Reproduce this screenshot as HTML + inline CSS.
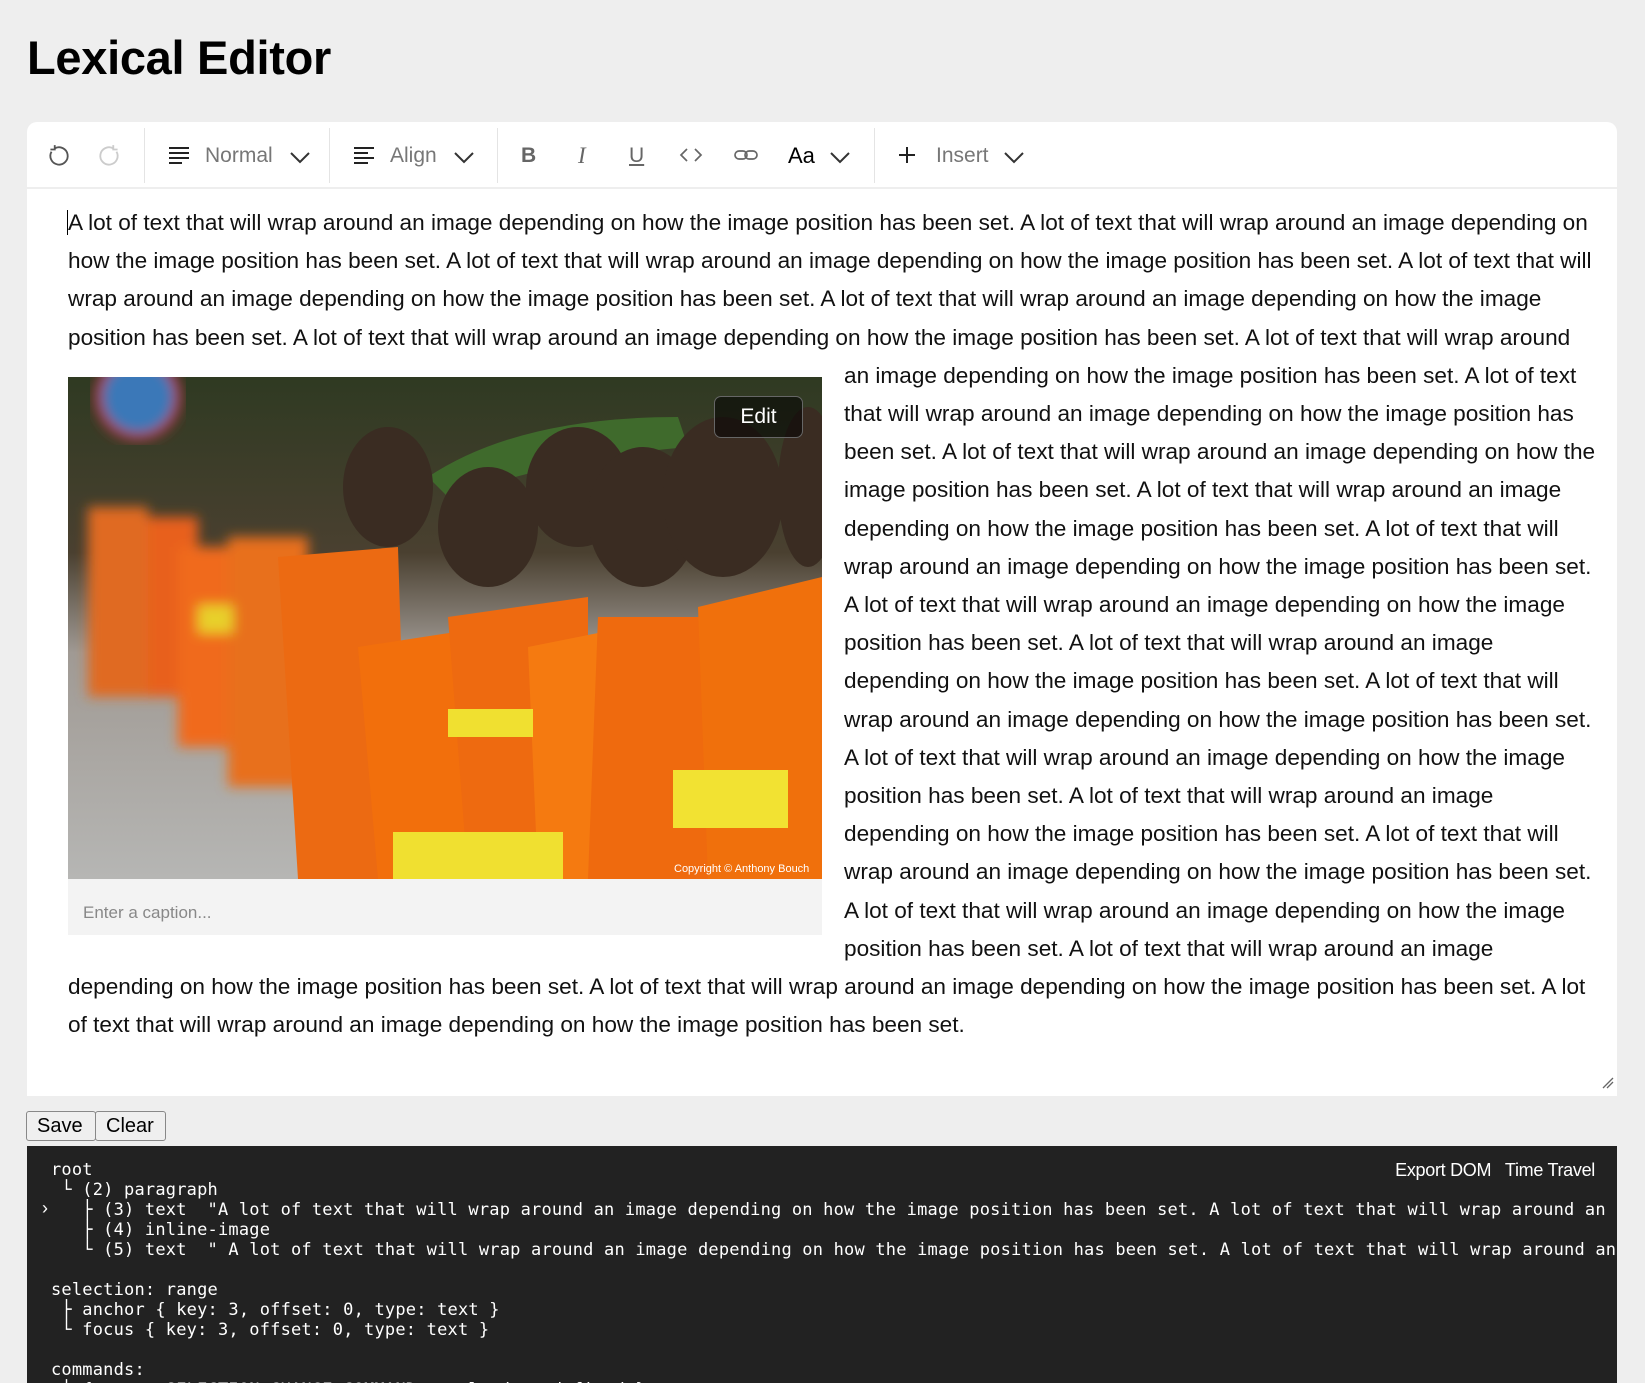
<!DOCTYPE html>
<html><head><meta charset="utf-8"><style>
*{box-sizing:border-box;margin:0;padding:0}
body{width:1645px;height:1383px;background:#eee;font-family:"Liberation Sans",sans-serif;overflow:hidden;position:relative}
h1{position:absolute;left:27px;top:30px;font-size:47px;font-weight:bold;color:#000;letter-spacing:-0.3px}
.ed{position:absolute;left:27px;top:122px;width:1590px;height:974px;background:#fff;border-radius:10px 10px 0 0}
.tb{position:absolute;left:0;top:0;width:100%;height:67px;border-bottom:2px solid #eee}
.tb .i{position:absolute;top:0;height:67px;line-height:67px;font-size:21px;color:#777}
.dv{position:absolute;top:6px;width:1px;height:55px;background:#e4e4e4}
.txt{position:absolute;left:41px;top:82px;width:1532px;font-size:22.6px;line-height:38.2px;color:#111}
.img{float:left;width:754px;height:558px;margin:20px 22px 0 0;background:#f3f3f3;position:relative}
.cap{position:absolute;left:15px;top:517px;font-size:17px;color:#888}
.edit{position:absolute;left:646px;top:19px;width:89px;height:42px;border:1px solid #666;border-radius:7px;background:rgba(0,0,0,.55);color:#fff;font-size:21px;text-align:center;line-height:40px}
.btn{position:absolute;top:1111px;height:30px;border:1px solid #888;border-radius:3px;background:#efefef;font-size:20px;line-height:28px;padding:0 10px;color:#000}
.dark{position:absolute;left:27px;top:1146px;width:1590px;height:237px;background:#222;color:#fff;overflow:hidden}
pre{position:absolute;left:24px;top:14px;font-family:"DejaVu Sans Mono","Liberation Mono",monospace;font-size:17px;line-height:20px;color:#fff;letter-spacing:0.2px;white-space:pre}
.ex{position:absolute;right:22px;top:14px;font-size:18px;color:#fff;letter-spacing:-.3px}
</style></head><body>
<h1>Lexical Editor</h1>
<div class="ed">
<div class="tb">
<svg style="position:absolute;left:18px;top:21px" width="26" height="26" viewBox="0 0 24 24" fill="none" stroke="#555" stroke-width="1.7"><path d="M6 8a8 8 0 1 0 3-3"/><path d="M9 2v4H5"/></svg>
<svg style="position:absolute;left:70px;top:21px" width="26" height="26" viewBox="0 0 24 24" fill="none" stroke="#ccc" stroke-width="1.7"><path d="M18 8a8 8 0 1 1-3-3"/><path d="M15 2v4h4"/></svg>
<div class="dv" style="left:117px"></div>
<svg style="position:absolute;left:140px;top:22px" width="24" height="22" viewBox="0 0 24 22" stroke="#222" stroke-width="2"><path d="M2 4h20M2 9h20M2 14h20M2 19h13"/></svg>
<div class="i" style="left:178px">Normal</div>
<svg style="position:absolute;left:262px;top:28px" width="22" height="14" viewBox="0 0 22 14" fill="none" stroke="#333" stroke-width="2"><path d="M2 3l9 9 9-9"/></svg>
<div class="dv" style="left:302px"></div>
<svg style="position:absolute;left:325px;top:22px" width="24" height="22" viewBox="0 0 24 22" stroke="#222" stroke-width="2"><path d="M2 4h20M2 9h14M2 14h20M2 19h14"/></svg>
<div class="i" style="left:363px">Align</div>
<svg style="position:absolute;left:426px;top:28px" width="22" height="14" viewBox="0 0 22 14" fill="none" stroke="#333" stroke-width="2"><path d="M2 3l9 9 9-9"/></svg>
<div class="dv" style="left:470px"></div>
<div class="i" style="left:494px;font-weight:bold;color:#666">B</div>
<div class="i" style="left:551px;font-style:italic;font-family:'Liberation Serif',serif;color:#666;font-size:23px">I</div>
<div class="i" style="left:602px;text-decoration:underline;color:#666">U</div>
<svg style="position:absolute;left:652px;top:24px" width="24" height="18" viewBox="0 0 24 18" fill="none" stroke="#666" stroke-width="1.7"><path d="M8 3L2 9l6 6M16 3l6 6-6 6"/></svg>
<svg style="position:absolute;left:706px;top:24px" width="26" height="18" viewBox="0 0 26 18" fill="none" stroke="#666" stroke-width="1.7"><rect x="2" y="5" width="12" height="8" rx="4"/><rect x="12" y="5" width="12" height="8" rx="4"/></svg>
<div class="i" style="left:761px;color:#000;font-size:22px">Aa</div>
<svg style="position:absolute;left:802px;top:28px" width="22" height="14" viewBox="0 0 22 14" fill="none" stroke="#333" stroke-width="2"><path d="M2 3l9 9 9-9"/></svg>
<div class="dv" style="left:847px"></div>
<svg style="position:absolute;left:870px;top:23px" width="20" height="20" viewBox="0 0 20 20" stroke="#222" stroke-width="2"><path d="M10 2v16M2 10h16"/></svg>
<div class="i" style="left:909px">Insert</div>
<svg style="position:absolute;left:976px;top:28px" width="22" height="14" viewBox="0 0 22 14" fill="none" stroke="#333" stroke-width="2"><path d="M2 3l9 9 9-9"/></svg>
</div>
<div class="txt"><span style="border-left:1px solid #000;margin-left:-1px"></span>A lot of text that will wrap around an image depending on how the image position has been set. A lot of text that will wrap around an image depending on how the image position has been set. A lot of text that will wrap around an image depending on how the image position has been set. A lot of text that will wrap around an image depending on how the image position has been set. A lot of text that will wrap around an image depending on how the image position has been set. A lot of text that will wrap around an image depending on how the image position has been set. A lot of text that will wrap <div class="img"><svg width="754" height="502" viewBox="0 0 754 502" style="display:block">
<defs><linearGradient id="bg" x1="0" y1="0" x2="0" y2="1"><stop offset="0" stop-color="#2f3a22"/><stop offset=".35" stop-color="#4a4030"/><stop offset=".55" stop-color="#a09a94"/><stop offset="1" stop-color="#b6b6b4"/></linearGradient>
<filter id="b"><feGaussianBlur stdDeviation="6"/></filter></defs>
<rect width="754" height="502" fill="url(#bg)"/>
<circle cx="70" cy="20" r="40" fill="#3a78b8" stroke="#a33" stroke-width="8" filter="url(#b)"/>
<path d="M360 100 Q450 40 610 40 L620 70 Q500 80 380 120Z" fill="#3f6a2c"/>
<g filter="url(#b)"><rect x="20" y="130" width="60" height="190" fill="#e06a20"/><rect x="80" y="140" width="50" height="180" fill="#e8601a"/><rect x="110" y="170" width="70" height="200" fill="#f06a1e"/><rect x="160" y="160" width="80" height="250" fill="#e8701c"/><rect x="130" y="228" width="35" height="28" fill="#e8d02a"/></g>
<ellipse cx="320" cy="110" rx="45" ry="60" fill="#3a2c22"/>
<ellipse cx="420" cy="150" rx="50" ry="60" fill="#3a2c22"/>
<ellipse cx="510" cy="110" rx="52" ry="60" fill="#3a2c22"/>
<ellipse cx="575" cy="140" rx="55" ry="70" fill="#3a2c22"/>
<ellipse cx="655" cy="120" rx="60" ry="80" fill="#3a2c22"/>
<ellipse cx="740" cy="110" rx="30" ry="80" fill="#3a2c22"/>
<path d="M210 180 L330 170 L340 502 L230 502Z" fill="#ec6a12"/>
<path d="M290 270 L420 250 L470 502 L310 502Z" fill="#f26f0c"/>
<path d="M380 240 L520 220 L520 502 L400 502Z" fill="#ee6a10"/>
<path d="M460 270 L560 250 L580 502 L470 502Z" fill="#f57a10"/>
<path d="M530 240 L660 240 L680 502 L520 502Z" fill="#ef6a0e"/>
<path d="M630 230 L754 200 L754 502 L640 502Z" fill="#f0700c"/>
<rect x="325" y="455" width="170" height="47" fill="#f0e030"/>
<rect x="605" y="393" width="115" height="58" fill="#f2e232"/>
<rect x="380" y="332" width="85" height="28" fill="#f0e030"/>
<text x="606" y="495" fill="#fff" font-size="11" font-family="Liberation Sans">Copyright © Anthony Bouch</text>
</svg><div class="cap">Enter a caption...</div><div class="edit">Edit</div></div>around an image depending on how the image position has been set. A lot of text that will wrap around an image depending on how the image position has been set. A lot of text that will wrap around an image depending on how the image position has been set. A lot of text that will wrap around an image depending on how the image position has been set. A lot of text that will wrap around an image depending on how the image position has been set. A lot of text that will wrap around an image depending on how the image position has been set. A lot of text that will wrap around an image depending on how the image position has been set. A lot of text that will wrap around an image depending on how the image position has been set. A lot of text that will wrap around an image depending on how the image position has been set. A lot of text that will wrap around an image depending on how the image position has been set. A lot of text that will wrap around an image depending on how the image position has been set. A lot of text that will wrap around an image depending on how the image position has been set. A lot of text that will wrap around an image depending on how the image position has been set. A lot of text that will wrap around an image depending on how the image position has been set. A lot of text that will wrap around an image depending on how the image position has been set.</div>
<svg style="position:absolute;right:2px;bottom:6px" width="14" height="14" viewBox="0 0 14 14" stroke="#666" stroke-width="1.3"><path d="M2 12L12 2M6 12l6-6"/></svg>
</div>
<div class="btn" style="left:26px;width:70px">Save</div>
<div class="btn" style="left:95px;width:71px">Clear</div>
<div class="dark">
<div class="ex">Export DOM&nbsp;&nbsp; Time Travel</div>
<pre>root
 └ (2) paragraph
   ├ (3) text  "A lot of text that will wrap around an image depending on how the image position has been set. A lot of text that will wrap around an image depending on how
   ├ (4) inline-image
   └ (5) text  " A lot of text that will wrap around an image depending on how the image position has been set. A lot of text that will wrap around an image depending on how

selection: range
 ├ anchor { key: 3, offset: 0, type: text }
 └ focus { key: 3, offset: 0, type: text }

commands:
 └ { type: SELECTION_CHANGE_COMMAND, payload: undefined }</pre>
<div style="position:absolute;left:15px;top:52px;font-size:18px;color:#fff">›</div>
</div>
</body></html>
